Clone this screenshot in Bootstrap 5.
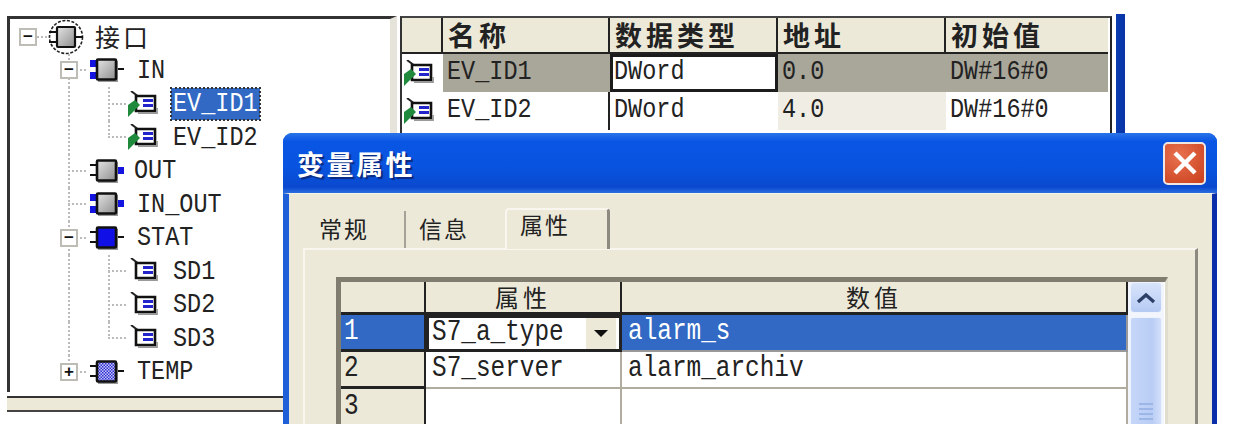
<!DOCTYPE html>
<html lang="zh">
<head>
    <meta charset="UTF-8">
    <meta name="viewport" content="width=device-width, initial-scale=1.0">
    <title>变量属性</title>
    <link href="https://cdn.jsdelivr.net/npm/bootstrap@5.3.0/dist/css/bootstrap.min.css" rel="stylesheet">
    <style>
        body {
            background-color: #fff;
            color: #222;
            font-family: "Liberation Mono", "Noto Sans CJK SC", monospace;
            font-size: 23.5px;
            line-height: 1;
            overflow: hidden;
        }
        .cjk { font-family: "Noto Sans CJK SC", sans-serif; }
        .xp-t { display: inline-block; transform: scaleY(1.2); }
        .xp-page { width: 1240px; height: 439px; padding: 16px 0 0 7px; overflow: hidden; }
        .xp-left { width: 390px; margin-right: 3px; flex: none; }

        /* tree */
        .xp-tree { height: 376px; border-top: 3px solid #333; border-left: 3px solid #333; border-right: 7px solid #e6e4da; padding-top: 1px; background: #fff; }
        .xp-hbar { height: 16px; margin-top: 4px; width: 393px; background: #ece9d8; border-top: 2px solid #333; border-bottom: 2px solid #444; }
        .xp-tree-row { height: 33.5px; }
        .xp-slot { width: 40px; height: 100%; flex: none; background-repeat: no-repeat; }
        .xp-first { width: 38px; }
        .g-v { background-image: repeating-linear-gradient(to bottom, #bbb 0 2px, transparent 2px 4px); background-size: 2px 100%; background-position: 20px 0; }
        .g-h { background-image: repeating-linear-gradient(to right, #bbb 0 2px, transparent 2px 4px); background-size: 21px 2px; background-position: 19px 50%; }
        .g-t { background-image: repeating-linear-gradient(to bottom, #bbb 0 2px, transparent 2px 4px), repeating-linear-gradient(to right, #bbb 0 2px, transparent 2px 4px); background-size: 2px 100%, 22px 2px; background-position: 20px 0, 20px 50%; }
        .g-l { background-image: repeating-linear-gradient(to bottom, #bbb 0 2px, transparent 2px 4px), repeating-linear-gradient(to right, #bbb 0 2px, transparent 2px 4px); background-size: 2px 50%, 22px 2px; background-position: 20px 0, 20px 50%; }
        .xp-exp { width: 18px; height: 18px; border: 2px solid #bdbdb5; background: #fff; font: 700 17px/13px "Liberation Sans", sans-serif; text-align: center; color: #111; margin-left: 12px; }
        .xp-root-exp { margin-left: 9px; }
        .xp-port { width: 34px; height: 24px; flex: none; margin-left: 2px; }
        .xp-root-port { width: 36px; height: 36px; flex: none; }
        .xp-tag { width: 30px; height: 26px; flex: none; }
        .xp-tree-text { margin-left: 13px; }
        .xp-out { margin-left: 10px; }
        .xp-sd { margin-left: 15px; }
        .xp-sel { background: #3169c4; color: #fff; outline: 2px dotted #333; outline-offset: -1px; padding: 4px 2px; margin-left: 13px; }
        .xp-plain { padding: 4px 2px; margin-left: 13px; }
        .xp-tree-cn { font-size: 25px; letter-spacing: 3px; margin-left: 11px; }

        /* upper grid */
        .xp-right { flex: none; height: 117px; }
        .xp-grid { flex: none; border-top: 2px solid #444; border-left: 2px solid #333; border-right: 2px solid #222; padding-right: 2px; width: 712px; background: #fff; }
        .xp-grid table, .xp-props table { table-layout: fixed; border-collapse: separate; border-spacing: 0; }
        .xp-grid table { width: 706px; }
        .xp-grid th { height: 36px; background: #ece9d8; border-bottom: 2px solid #222; border-right: 2px solid #222; font-size: 27px; font-weight: 700; padding: 0 0 0 5px; letter-spacing: 4px; line-height: 30px; }
        .xp-grid th:last-child { border-right: 0; }
        .xp-grid td { height: 38px; padding: 0 0 2px 4px; background: #fff; }
        .xp-grid td.xp-ic { padding: 0 0 0 2px; }
        .xp-grid td.xp-div { border-right: 2px solid #222; }
        .xp-grid tr.xp-cur td:not(.xp-ic) { background: #a9a69a; }
        .xp-grid tr.xp-cur td.xp-edit { background: #fff; border: 3px solid #1c1c1c; padding-left: 1px; }
        .xp-grid td.xp-ro { background: #f0eee4; }
        .xp-blue-edge { width: 9px; height: 119px; margin: -2px 0 0 4px; background: linear-gradient(to right, #0a3cb0, #0833a4); flex: none; }

        /* dialog */
        .xp-win { position: absolute; left: 283px; top: 133px; width: 934px; height: 291px; border: 0; border-radius: 9px 9px 0 0; overflow: hidden; background: #1f5fd8; }
        .xp-title { height: 60px; padding: 0 11px 0 14px; border: 0; border-radius: 0; background: linear-gradient(to bottom, #2a74e8 0, #0a56e4 14%, #0854e0 55%, #0a49cf 90%, #2b6de0 100%); }
        .xp-title-text { color: #fff; font-size: 27px; font-weight: 700; letter-spacing: 2.5px; text-shadow: 2px 2px 1px #0a2a80; }
        .xp-close { width: 43px; height: 43px; padding: 0; border: 2px solid #f0e6e2; border-radius: 5px; background: radial-gradient(circle at 35% 30%, #e8714f, #c93f1c); display: flex; align-items: center; justify-content: center; }
        .xp-body { height: 231px; padding: 14px 0 0 14px; background: #ece9d8; border-left: 6px solid #1f5fd8; border-right: 5px solid #0a2fa8; border-top: 1px solid #f5f3e8; }
        .xp-tabs { padding-left: 7px; border-bottom: 0; height: 40px; flex-wrap: nowrap; }
        .xp-tabs .nav-link { color: #222; height: 37px; margin: 3px 2px 0 0; padding: 4px 0 0 9px; width: 96px; font-size: 23px; letter-spacing: 2px; background: #ece9d8; border: 0; border-right: 2px solid #a5a397; border-radius: 0; line-height: 26px; }
        .xp-tabs .xp-tab-mid { width: 97px; margin-right: 0; padding-left: 11px; border-right: 0; }
        .xp-tabs .nav-link.active { height: 41px; margin: 0 0 -1px 0; width: 105px; padding: 1px 0 0 13px; border-top: 2px solid #f8f6ee; border-left: 2px solid #f8f6ee; border-right: 3px solid #8c8a80; border-radius: 4px 4px 0 0; color: #222; background: #ece9d8; }
        .xp-panel { width: 895px; height: 190px; padding: 27px 0 0 31px; border-top: 2px solid #f8f6ee; border-left: 2px solid #f8f6ee; border-right: 3px solid #8c8a80; }
        .xp-props { width: 832px; height: 163px; border-top: 5px solid #807d70; border-left: 5px solid #807d70; border-right: 3px solid #e0ddcf; background: #fff; }
        .xp-props th { height: 33px; background: #ece9d8; border-bottom: 3px solid #222; border-right: 2px solid #222; font-size: 24px; font-weight: 400; letter-spacing: 4px; text-align: center; padding: 0; line-height: 28px; }
        .xp-props td { height: 37px; padding: 0 0 0 6px; border-right: 2px solid #b0ad9f; border-bottom: 2px solid #b0ad9f; background: #fff; font-size: 24.4px; }
        .xp-props td.xp-rh { background: #ece9d8; border-right: 2px solid #222; border-bottom: 3px solid #222; padding-left: 3px; }
        .xp-props tr.xp-hit td { background: #3169c4; color: #fff; border-color: #999; }
        .xp-props tr.xp-hit td.xp-rh { border-right: 2px solid #222; border-bottom-color: #222; }
        .xp-props tr.xp-hit td.xp-combo { background: #fff; color: #222; border: 3px solid #222; padding: 0 3px 0 3px; }
        .xp-props tr.xp-open td { height: 44px; vertical-align: top; padding-top: 6px; border-bottom: 0; }
        .xp-arrow { width: 30px; height: 31px; background: #ece9d8; }
        .xp-arrow::after { content: ""; border-left: 7px solid transparent; border-right: 7px solid transparent; border-top: 7px solid #111; }
        .xp-scroll { width: 36px; flex: none; background: #f3f5fc; padding: 0 2px; }
        .xp-up { height: 31px; background: linear-gradient(to bottom, #d8e4fb, #b5caf3); border: 1px solid #eef2fd; border-radius: 4px; }
        .xp-thumb { margin-top: 4px; height: 110px; background: linear-gradient(to right, #c5d6f8, #b9cdf5 70%, #d3dffa); border: 1px solid #eef2fd; border-radius: 3px 3px 0 0; padding-top: 85px; }
        .xp-grip { width: 14px; height: 2px; background: #9db6e8; margin-bottom: 3px; }
    </style>
</head>
<body>
    <svg width="0" height="0" class="position-absolute">
        <defs>
            <linearGradient id="gr" x1="0" y1="0" x2="1" y2="1"><stop offset="0" stop-color="#e4e4e4"/><stop offset="1" stop-color="#8e8e8e"/></linearGradient>
            <pattern id="ck" width="3" height="3" patternUnits="userSpaceOnUse"><rect width="3" height="3" fill="#c9c9f2"/><rect width="1.5" height="1.5" fill="#2c2cd8"/><rect x="1.5" y="1.5" width="1.5" height="1.5" fill="#2c2cd8"/></pattern>
            <symbol id="body-gr" viewBox="0 0 34 24"><rect x="8" y="3" width="20" height="21" fill="#999"/><rect x="7" y="1.5" width="19" height="20" fill="url(#gr)" stroke="#111" stroke-width="2.6" rx="1"/></symbol>
            <symbol id="tag" viewBox="0 0 30 26"><path d="M3 0 11 6" stroke="#222" stroke-width="2"/><path d="M8 5H27V20H8Z" fill="#fff" stroke="#111" stroke-width="2.6"/><path d="M10 22H29V17" fill="none" stroke="#999" stroke-width="1.8"/><rect x="15" y="8" width="10" height="3" fill="#2424cc"/><rect x="15" y="13" width="10" height="3" fill="#2424cc"/></symbol>
            <symbol id="flag" viewBox="0 0 30 26"><path d="M0 26V14L7 9 12 14 6 20Z" fill="#1f8a3c"/></symbol>
        </defs>
    </svg>

    <div class="xp-page d-flex">
        <div class="xp-left">
            <div class="xp-tree">
                <div class="xp-tree-row d-flex align-items-center">
                    <div class="xp-slot xp-first g-h d-flex align-items-center"><div class="xp-exp xp-root-exp">−</div></div>
                    <svg class="xp-root-port" viewBox="0 0 36 36"><circle cx="18" cy="18" r="16.5" fill="none" stroke="#222" stroke-width="1.6" stroke-dasharray="3 1.6"/><path d="M1 13H9M1 23H9M27 18H35" stroke="#111" stroke-width="1.8"/><rect x="9" y="8" width="18" height="20" rx="1" fill="url(#gr)" stroke="#111" stroke-width="2.2"/></svg>
                    <span class="xp-tree-cn cjk">接口</span>
                </div>
                <div class="xp-tree-row d-flex align-items-center">
                    <div class="xp-slot xp-first"></div>
                    <div class="xp-slot g-t d-flex align-items-center"><div class="xp-exp">−</div></div>
                    <svg class="xp-port" viewBox="0 0 34 24"><rect y="2" width="8" height="7" fill="#1414e0"/><rect y="14" width="8" height="7" fill="#1414e0"/><path d="M26 11H34" stroke="#111" stroke-width="2"/><use href="#body-gr"/></svg>
                    <span class="xp-tree-text xp-t">IN</span>
                </div>
                <div class="xp-tree-row d-flex align-items-center">
                    <div class="xp-slot xp-first"></div>
                    <div class="xp-slot g-v"></div>
                    <div class="xp-slot g-t"></div>
                    <svg class="xp-tag"><use href="#tag"/><use href="#flag"/></svg>
                    <span class="xp-sel"><span class="xp-t">EV_ID1</span></span>
                </div>
                <div class="xp-tree-row d-flex align-items-center">
                    <div class="xp-slot xp-first"></div>
                    <div class="xp-slot g-v"></div>
                    <div class="xp-slot g-l"></div>
                    <svg class="xp-tag"><use href="#tag"/><use href="#flag"/></svg>
                    <span class="xp-plain"><span class="xp-t">EV_ID2</span></span>
                </div>
                <div class="xp-tree-row d-flex align-items-center">
                    <div class="xp-slot xp-first"></div>
                    <div class="xp-slot g-t"></div>
                    <svg class="xp-port" viewBox="0 0 34 24"><path d="M0 6H8M0 16H8" stroke="#111" stroke-width="2"/><rect x="26" y="8" width="8" height="7" fill="#1414e0"/><use href="#body-gr"/></svg>
                    <span class="xp-out xp-t">OUT</span>
                </div>
                <div class="xp-tree-row d-flex align-items-center">
                    <div class="xp-slot xp-first"></div>
                    <div class="xp-slot g-t"></div>
                    <svg class="xp-port" viewBox="0 0 34 24"><rect y="2" width="8" height="7" fill="#1414e0"/><rect y="14" width="8" height="7" fill="#1414e0"/><rect x="26" y="8" width="8" height="7" fill="#1414e0"/><use href="#body-gr"/></svg>
                    <span class="xp-tree-text xp-t">IN_OUT</span>
                </div>
                <div class="xp-tree-row d-flex align-items-center">
                    <div class="xp-slot xp-first"></div>
                    <div class="xp-slot g-t d-flex align-items-center"><div class="xp-exp">−</div></div>
                    <svg class="xp-port" viewBox="0 0 34 24"><path d="M0 6H8M0 16H8M26 11H34" stroke="#111" stroke-width="2"/><rect x="8" y="3" width="20" height="21" fill="#999"/><rect x="7" y="1.5" width="19" height="20" fill="#1010e6" stroke="#111" stroke-width="2.6" rx="1"/></svg>
                    <span class="xp-tree-text xp-t">STAT</span>
                </div>
                <div class="xp-tree-row d-flex align-items-center">
                    <div class="xp-slot xp-first"></div>
                    <div class="xp-slot g-v"></div>
                    <div class="xp-slot g-t"></div>
                    <svg class="xp-tag"><use href="#tag"/></svg>
                    <span class="xp-sd xp-t">SD1</span>
                </div>
                <div class="xp-tree-row d-flex align-items-center">
                    <div class="xp-slot xp-first"></div>
                    <div class="xp-slot g-v"></div>
                    <div class="xp-slot g-t"></div>
                    <svg class="xp-tag"><use href="#tag"/></svg>
                    <span class="xp-sd xp-t">SD2</span>
                </div>
                <div class="xp-tree-row d-flex align-items-center">
                    <div class="xp-slot xp-first"></div>
                    <div class="xp-slot g-v"></div>
                    <div class="xp-slot g-l"></div>
                    <svg class="xp-tag"><use href="#tag"/></svg>
                    <span class="xp-sd xp-t">SD3</span>
                </div>
                <div class="xp-tree-row d-flex align-items-center">
                    <div class="xp-slot xp-first"></div>
                    <div class="xp-slot g-l d-flex align-items-center"><div class="xp-exp">+</div></div>
                    <svg class="xp-port" viewBox="0 0 34 24"><path d="M0 6H8M0 16H8M26 11H34" stroke="#111" stroke-width="2"/><rect x="8" y="3" width="20" height="21" fill="#999"/><rect x="7" y="1.5" width="19" height="20" fill="url(#ck)" stroke="#111" stroke-width="2.6" rx="1"/></svg>
                    <span class="xp-tree-text xp-t">TEMP</span>
                </div>
            </div>
            <div class="xp-hbar"></div>
        </div>

        <div class="xp-right d-flex">
            <div class="xp-grid">
                <table>
                    <colgroup><col style="width: 41px"><col style="width: 167px"><col style="width: 168px"><col style="width: 168px"><col style="width: 162px"></colgroup>
                    <thead>
                        <tr><th></th><th class="cjk">名称</th><th class="cjk">数据类型</th><th class="cjk">地址</th><th class="cjk">初始值</th></tr>
                    </thead>
                    <tbody>
                        <tr class="xp-cur">
                            <td class="xp-ic"><svg class="xp-tag"><use href="#tag"/><use href="#flag"/></svg></td>
                            <td><span class="xp-t">EV_ID1</span></td>
                            <td class="xp-edit"><span class="xp-t">DWord</span></td>
                            <td><span class="xp-t">0.0</span></td>
                            <td><span class="xp-t">DW#16#0</span></td>
                        </tr>
                        <tr>
                            <td class="xp-ic"><svg class="xp-tag"><use href="#tag"/><use href="#flag"/></svg></td>
                            <td class="xp-div"><span class="xp-t">EV_ID2</span></td>
                            <td><span class="xp-t">DWord</span></td>
                            <td class="xp-ro"><span class="xp-t">4.0</span></td>
                            <td><span class="xp-t">DW#16#0</span></td>
                        </tr>
                    </tbody>
                </table>
            </div>
            <div class="xp-blue-edge"></div>
        </div>
    </div>

    <div class="card xp-win">
        <div class="card-header xp-title d-flex align-items-center justify-content-between">
            <span class="xp-title-text cjk">变量属性</span>
            <button class="xp-close" type="button" aria-label="关闭">
                <svg width="26" height="26" viewBox="0 0 26 26"><path d="M3 3 23 23M23 3 3 23" stroke="#fff" stroke-width="4.4"/></svg>
            </button>
        </div>
        <div class="card-body xp-body">
            <ul class="nav nav-tabs xp-tabs">
                <li class="nav-item"><a class="nav-link cjk" href="#">常规</a></li>
                <li class="nav-item"><a class="nav-link xp-tab-mid cjk" href="#">信息</a></li>
                <li class="nav-item"><a class="nav-link active cjk" href="#">属性</a></li>
            </ul>
            <div class="xp-panel">
                <div class="xp-props d-flex align-items-start">
                    <table>
                        <colgroup><col style="width: 85px"><col style="width: 196px"><col style="width: 506px"></colgroup>
                        <thead>
                            <tr><th></th><th class="cjk">属性</th><th class="cjk">数值</th></tr>
                        </thead>
                        <tbody>
                            <tr class="xp-hit">
                                <td class="xp-rh"><span class="xp-t">1</span></td>
                                <td class="xp-combo"><div class="d-flex align-items-center justify-content-between"><span class="xp-t">S7_a_type</span><span class="xp-arrow d-flex align-items-center justify-content-center"></span></div></td>
                                <td><span class="xp-t">alarm_s</span></td>
                            </tr>
                            <tr>
                                <td class="xp-rh"><span class="xp-t">2</span></td>
                                <td><span class="xp-t">S7_server</span></td>
                                <td><span class="xp-t">alarm_archiv</span></td>
                            </tr>
                            <tr class="xp-open">
                                <td class="xp-rh"><span class="xp-t">3</span></td>
                                <td></td>
                                <td></td>
                            </tr>
                        </tbody>
                    </table>
                    <div class="xp-scroll">
                        <div class="xp-up d-flex align-items-center justify-content-center">
                            <svg width="20" height="12" viewBox="0 0 20 12"><path d="M2 10 10 3 18 10" fill="none" stroke="#2c3f66" stroke-width="3.4"/></svg>
                        </div>
                        <div class="xp-thumb d-flex flex-column align-items-center">
                            <div class="xp-grip"></div><div class="xp-grip"></div><div class="xp-grip"></div><div class="xp-grip"></div>
                        </div>
                    </div>
                </div>
            </div>
        </div>
    </div>

    <script src="https://cdn.jsdelivr.net/npm/bootstrap@5.3.0/dist/js/bootstrap.bundle.min.js"></script>
</body>
</html>
